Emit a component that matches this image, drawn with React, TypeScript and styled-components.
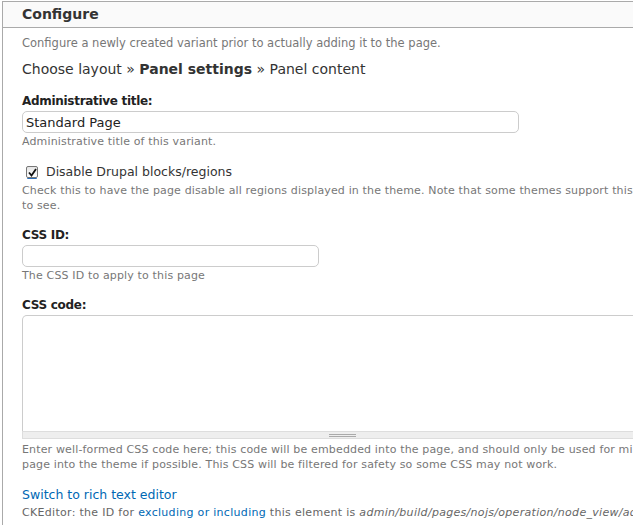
import React from 'react';
import styled, { createGlobalStyle } from 'styled-components';

const GlobalStyle = createGlobalStyle`
  html, body {
    margin: 0;
    padding: 0;
    background: #fff;
    overflow: hidden;
  }
  body {
    font-family: "DejaVu Sans", Verdana, sans-serif;
    color: #333;
  }
`;

const App: React.FC = () => {
  return (
    <>
      <GlobalStyle />
      <Page>
        <Panel>
          <PanelHeader>Configure</PanelHeader>
          <PanelBody>
            <Intro>Configure a newly created variant prior to actually adding it to the page.</Intro>
            <Steps>
              Choose layout » <b>Panel settings</b> » Panel content
            </Steps>

            <FormItem>
              <Label>Administrative title:</Label>
              <TextInput width={497} defaultValue="Standard Page" />
              <Description>Administrative title of this variant.</Description>
            </FormItem>

            <FormItem space={14}>
              <CheckRow>
                <CheckBox>
                  <svg width="9" height="9" viewBox="0 0 9 9">
                    <path d="M1 4.5 L3.5 7.5 L8 1" fill="none" stroke="#111" strokeWidth="1.8" />
                  </svg>
                </CheckBox>
                Disable Drupal blocks/regions
              </CheckRow>
              <Description space={2}>
                Check this to have the page disable all regions displayed in the theme. Note that some themes support this
                setting better than others. If in doubt, try with stock themes
                <br />
                to see.
              </Description>
            </FormItem>

            <FormItem space={13}>
              <Label>CSS ID:</Label>
              <TextInput width={297} />
              <Description>The CSS ID to apply to this page</Description>
            </FormItem>

            <FormItem space={13}>
              <Label>CSS code:</Label>
              <TextArea />
              <Grippie>
                <GripLines />
              </Grippie>
              <Description space={3}>
                Enter well-formed CSS code here; this code will be embedded into the page, and should only be used for minor
                adjustments; it is usually better to try to put CSS for the
                <br />
                page into the theme if possible. This CSS will be filtered for safety so some CSS may not work.
              </Description>
            </FormItem>

            <SwitchLink href="#">Switch to rich text editor</SwitchLink>
            <EditorNote>
              CKEditor: the ID for <InlineLink href="#">excluding or including</InlineLink> this element is{' '}
              <em>admin/build/pages/nojs/operation/node_view/add</em>
            </EditorNote>
          </PanelBody>
        </Panel>
      </Page>
    </>
  );
};

const Page = styled.div`
  width: 1100px;
  padding-top: 1px;
`;

const Panel = styled.div`
  margin-left: 2px;
  border-left: 1px solid #aaa;
  min-height: 540px;
`;

const PanelHeader = styled.h2`
  margin: 0;
  height: 25px;
  padding-left: 19px;
  border-top: 1px solid #aaa;
  border-bottom: 1px solid #aaa;
  background: #fafafa;
  font-family: "DejaVu Sans", Verdana, sans-serif;
  font-size: 14px;
  font-weight: bold;
  line-height: 25px;
  color: #333;
`;

const PanelBody = styled.div`
  padding: 7px 0 0 19px;
`;

const Intro = styled.p`
  margin: 0;
  font-size: 11.5px;
  line-height: 16px;
  color: #777;
`;

const Steps = styled.p`
  margin: 8px 0 0;
  font-size: 14px;
  line-height: 20px;
  color: #333;

  b {
    font-weight: bold;
  }
`;

const FormItem = styled.div<{ space?: number }>`
  margin-top: ${({ space = 13 }) => space}px;
`;

const Label = styled.label`
  display: block;
  font-size: 12px;
  font-weight: bold;
  letter-spacing: -0.3px;
  line-height: 18px;
  color: #222;
  margin-bottom: 1px;
`;

const TextInput = styled.input<{ width: number }>`
  display: block;
  box-sizing: border-box;
  width: ${({ width }) => width}px;
  height: 22px;
  margin: 0;
  padding: 1px 3px;
  border: 1px solid #ccc;
  border-radius: 5px;
  background: #fff;
  font-family: "DejaVu Sans", Verdana, sans-serif;
  font-size: 13px;
  color: #222;
  outline: none;
`;

const Description = styled.div<{ space?: number }>`
  margin-top: ${({ space = 1 }) => space}px;
  font-size: 11px;
  letter-spacing: 0.15px;
  line-height: 15px;
  color: #777;
  white-space: nowrap;
`;

const CheckRow = styled.label`
  display: flex;
  align-items: center;
  gap: 8px;
  padding-left: 4px;
  font-size: 12.5px;
  line-height: 18px;
  color: #333;
`;

const CheckBox = styled.span`
  box-sizing: border-box;
  display: inline-flex;
  align-items: center;
  justify-content: center;
  width: 12px;
  height: 12px;
  border: 1px solid #777;
  border-radius: 2px;
  background: linear-gradient(#e6e6e6, #fff);
  box-shadow: 0 2px 0 -1px #2a6db8;
`;

const TextArea = styled.textarea`
  display: block;
  box-sizing: border-box;
  width: 640px;
  height: 116px;
  margin: 0;
  border: 1px solid #ccc;
  border-bottom: none;
  border-radius: 5px 5px 0 0;
  resize: none;
  outline: none;
  font-family: "DejaVu Sans Mono", monospace;
`;

const Grippie = styled.div`
  width: 640px;
  height: 8px;
  background: #eee;
  border: 1px solid #ddd;
  box-sizing: border-box;
  display: flex;
  align-items: center;
  justify-content: center;
`;

const GripLines = styled.span`
  width: 27px;
  height: 3px;
  border-top: 1px solid #aaa;
  border-bottom: 1px solid #aaa;
  box-sizing: border-box;
`;

const SwitchLink = styled.a`
  display: block;
  margin-top: 14px;
  font-size: 12.5px;
  line-height: 18px;
  color: #0068b4;
  text-decoration: none;
`;

const EditorNote = styled.div`
  font-size: 11px;
  letter-spacing: 0.3px;
  line-height: 18px;
  color: #666;
  white-space: nowrap;

  em {
    font-style: italic;
  }
`;

const InlineLink = styled.a`
  color: #0068b4;
  text-decoration: none;
`;

export default App;
